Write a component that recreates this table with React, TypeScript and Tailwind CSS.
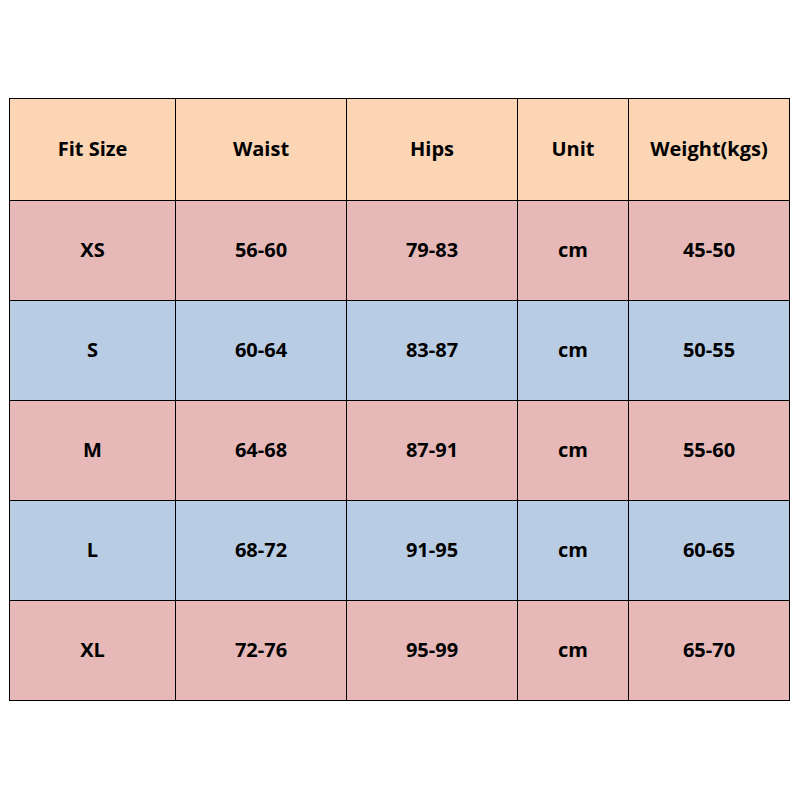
const header = ["Fit Size", "Waist", "Hips", "Unit", "Weight(kgs)"];

const rows = [
  ["XS", "56-60", "79-83", "cm", "45-50"],
  ["S", "60-64", "83-87", "cm", "50-55"],
  ["M", "64-68", "87-91", "cm", "55-60"],
  ["L", "68-72", "91-95", "cm", "60-65"],
  ["XL", "72-76", "95-99", "cm", "65-70"],
];

export default function App() {
  return (
    <div className="h-[800px] w-[800px] bg-white pl-[9px] pt-[98px] font-['Open_Sans',sans-serif] text-[20px] font-bold text-black">
      <div className="grid w-max grid-cols-[166px_171px_171px_111px_161px] border-l border-t border-black">
        {header.map((h) => (
          <div
            key={h}
            className="flex h-[102px] items-center justify-center border-b border-r border-black bg-[#fcd5b4] pb-[2px]"
          >
            {h}
          </div>
        ))}
        {rows.map((row, i) =>
          row.map((cell, j) => (
            <div
              key={`${i}-${j}`}
              className={`flex h-[100px] items-center justify-center border-b border-r border-black pb-[2px] ${
                i % 2 === 0 ? "bg-[#e6b8b7]" : "bg-[#b8cce4]"
              }`}
            >
              {cell}
            </div>
          ))
        )}
      </div>
    </div>
  );
}
